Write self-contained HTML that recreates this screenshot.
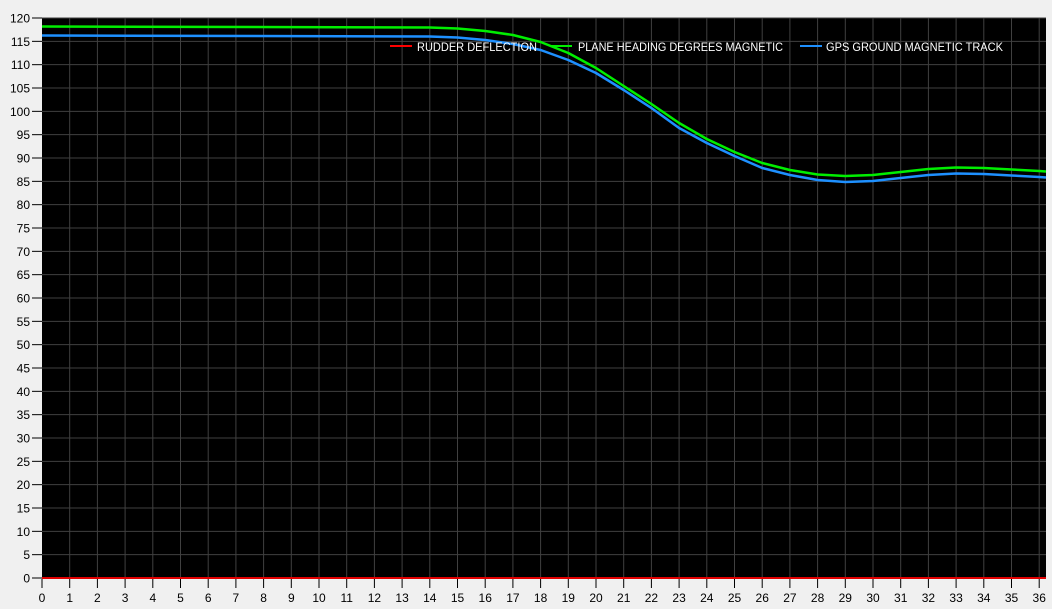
<!DOCTYPE html>
<html><head><style>
html,body{margin:0;padding:0;background:#f0f0f0;width:1052px;height:609px;overflow:hidden;font-family:"Liberation Sans",sans-serif}
</style></head><body>
<svg width="1052" height="609" xmlns="http://www.w3.org/2000/svg" style="position:absolute;left:0;top:0;font-family:'Liberation Sans',sans-serif">
<rect x="42" y="18" width="1004" height="561" fill="#000"/>
<g id="grid" stroke="#404040" stroke-width="1"></g>
<g id="ticks" stroke="#000" stroke-width="1"></g>
<g id="ylab" font-size="12" fill="#000" text-anchor="end"></g>
<g id="xlab" font-size="12" fill="#000" text-anchor="middle"></g>
<line x1="42" y1="578" x2="1046" y2="578" stroke="#e00000" stroke-width="2"/>
<polyline fill="none" stroke="#1e90ff" stroke-width="2.5" stroke-linejoin="round" points="42,35.5 429.8,36.5 457.5,37.5 485.2,40 512.9,44 540.6,50 568.3,60 596,73 623.7,90 651.4,108 679.1,128 706.8,143 734.5,156 762.2,168 789.9,175 817.6,180 845.3,182 873,181 900.7,178 928.4,175 956.1,173.5 983.8,174 1011.5,175.5 1039.2,177 1046,177.5"/>
<polyline fill="none" stroke="#00ee00" stroke-width="2.5" stroke-linejoin="round" points="42,26.5 429.8,27.5 457.5,28.5 485.2,31 512.9,35 540.6,42 568.3,53 596,68 623.7,86 651.4,104 679.1,123 706.8,139 734.5,152 762.2,163 789.9,170 817.6,174.5 845.3,176 873,175 900.7,172 928.4,169 956.1,167.5 983.8,168 1011.5,169.5 1039.2,171 1046,171.5"/>
<g font-size="12" fill="#fff">
<line x1="390" y1="46" x2="412" y2="46" stroke="#ff0000" stroke-width="2"/>
<text x="417" y="51" textLength="120" lengthAdjust="spacingAndGlyphs">RUDDER DEFLECTION</text>
<line x1="550" y1="46" x2="572" y2="46" stroke="#00ee00" stroke-width="2"/>
<text x="578" y="51" textLength="205" lengthAdjust="spacingAndGlyphs">PLANE HEADING DEGREES MAGNETIC</text>
<line x1="800" y1="46" x2="822" y2="46" stroke="#1e90ff" stroke-width="2"/>
<text x="826" y="51" textLength="177" lengthAdjust="spacingAndGlyphs">GPS GROUND MAGNETIC TRACK</text>
</g>
</svg>
<script>
var ns="http://www.w3.org/2000/svg";
function el(p,t,a,txt){var e=document.createElementNS(ns,t);for(var k in a)e.setAttribute(k,a[k]);if(txt!==undefined)e.textContent=txt;document.getElementById(p).appendChild(e);}
for(var i=0;i<=24;i++){var y=578-i*23.333;
 if(i>0)el("grid","line",{x1:42,x2:1046,y1:y,y2:y});
 el("ticks","line",{x1:32,x2:42,y1:y,y2:y});
 el("ylab","text",{x:30,y:y+4.5},String(i*5));}
for(var j=0;j<=36;j++){var x=42+j*27.7;
 if(j>0)el("grid","line",{x1:x,x2:x,y1:18,y2:578});
 el("ticks","line",{x1:x,x2:x,y1:579,y2:588});
 el("xlab","text",{x:x,y:602},String(j));}
</script>
</body></html>
